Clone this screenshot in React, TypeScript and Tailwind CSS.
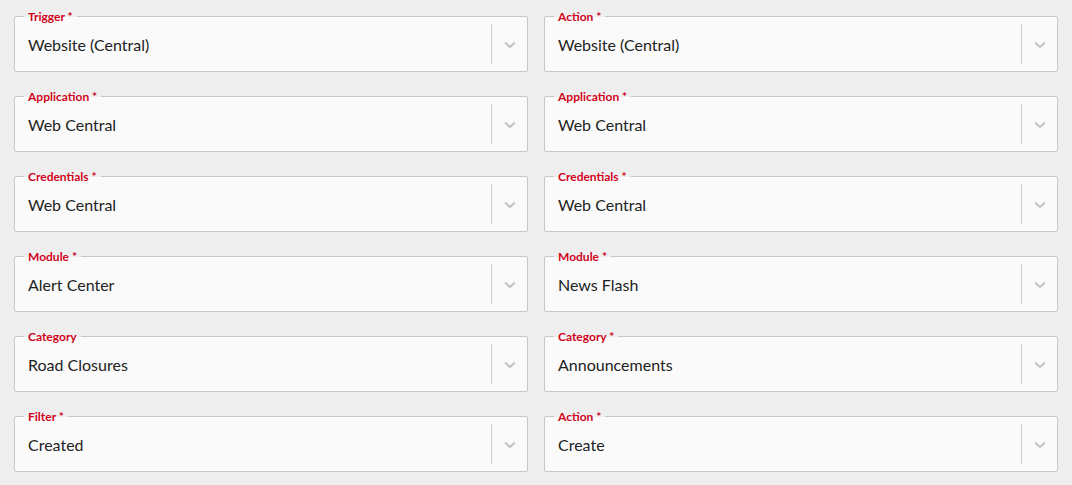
import React from "react";

type Field = { label: string; required: boolean; value: string };

const left: Field[] = [
  { label: "Trigger", required: true, value: "Website (Central)" },
  { label: "Application", required: true, value: "Web Central" },
  { label: "Credentials", required: true, value: "Web Central" },
  { label: "Module", required: true, value: "Alert Center" },
  { label: "Category", required: false, value: "Road Closures" },
  { label: "Filter", required: true, value: "Created" },
];

const right: Field[] = [
  { label: "Action", required: true, value: "Website (Central)" },
  { label: "Application", required: true, value: "Web Central" },
  { label: "Credentials", required: true, value: "Web Central" },
  { label: "Module", required: true, value: "News Flash" },
  { label: "Category", required: true, value: "Announcements" },
  { label: "Action", required: true, value: "Create" },
];

function Chevron() {
  return (
    <svg width="12" height="8" viewBox="0 0 12 8" fill="none">
      <path d="M1 1.5 L6 6 L11 1.5" stroke="#c4c4c4" strokeWidth="2.2" />
    </svg>
  );
}

function SelectField({ f }: { f: Field }) {
  return (
    <div className="relative h-[56px] rounded-[2px] border border-[#c8c8c8] bg-[#fafafa] flex items-center">
      <span className="absolute left-[9px] top-[-8px] px-[4px] text-[12px] font-bold leading-[16px] text-[#d0021b] bg-[linear-gradient(to_bottom,#eeeeee_0,#eeeeee_8px,#fafafa_8px,#fafafa_100%)]">
        {f.label}
        {f.required ? " *" : ""}
      </span>
      <div className="flex-1 pl-[13px] pt-[2px] text-[16px] text-[#222222]">{f.value}</div>
      <div className="w-px h-[40px] bg-[#cccccc]" />
      <div className="w-[35px] flex items-center justify-center pt-[1px]">
        <Chevron />
      </div>
    </div>
  );
}

export default function App() {
  return (
    <div
      className="w-[1072px] h-[485px] bg-[#eeeeee] px-[14px] pt-[16px]"
      style={{ fontFamily: "Lato, 'Liberation Sans', sans-serif" }}
    >
      <div className="grid grid-cols-2 gap-x-[16px] gap-y-[24px]">
        {left.map((f, i) => (
          <React.Fragment key={i}>
            <SelectField f={f} />
            <SelectField f={right[i]} />
          </React.Fragment>
        ))}
      </div>
    </div>
  );
}
